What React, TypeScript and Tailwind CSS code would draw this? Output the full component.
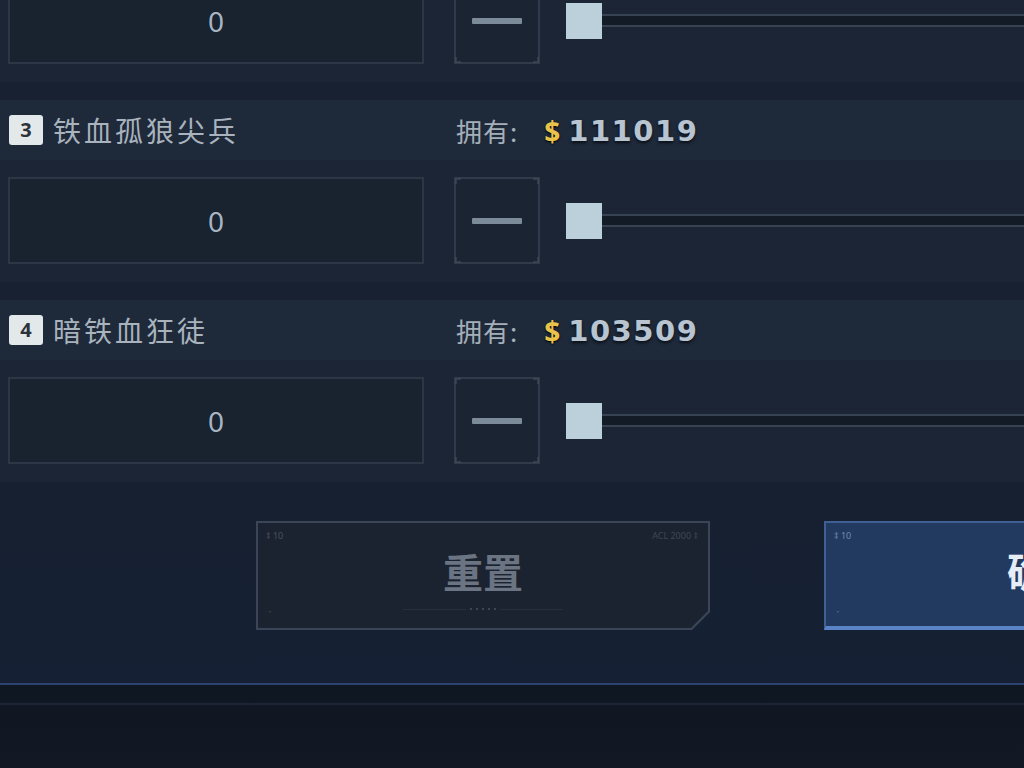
import React from 'react';

type Unit = {
  idx: number;
  name: string;
  owned: string;
};

const units: Unit[] = [
  { idx: 3, name: '铁血孤狼尖兵', owned: '111019' },
  { idx: 4, name: '暗铁血狂徒', owned: '103509' },
];

const cjk = { fontFamily: '"Noto Sans CJK SC", "Noto Sans", sans-serif' };
const num = { fontFamily: '"Noto Sans", "Liberation Sans", sans-serif' };
const wide = { fontFamily: '"DejaVu Sans", "Noto Sans", sans-serif' };

const Corners = ({ color = 'border-[#46536380]' }: { color?: string }) => (
  <>
    <span className={`absolute -left-px -top-px w-[6px] h-[6px] border-l-2 border-t-2 ${color}`} />
    <span className={`absolute -right-px -top-px w-[6px] h-[6px] border-r-2 border-t-2 ${color}`} />
    <span className={`absolute -left-px -bottom-px w-[6px] h-[6px] border-l-2 border-b-2 ${color}`} />
    <span className={`absolute -right-px -bottom-px w-[6px] h-[6px] border-r-2 border-b-2 ${color}`} />
  </>
);

const AmountRow = ({ className = '' }: { className?: string }) => (
  <div className={`bg-[#1b2535] h-[122px] pt-[17px] pl-2 flex ${className}`}>
    <div className="relative w-[416px] h-[87px] border-2 border-[#2b3747] bg-[#19222f] flex items-center justify-center">
      <span className="text-[28px] text-[#a7b5c2]" style={num}>0</span>
    </div>
    <div className="relative ml-[30px] w-[86px] h-[87px] border-2 border-[#2f3b4b] bg-[#1a2433] flex items-center justify-center">
      <Corners />
      <span className="w-[50px] h-[6px] bg-[#7c8b99] rounded-[1px]" />
    </div>
    <div className="ml-[26px] flex-1 h-[87px] flex items-center">
      <div className="w-[36px] h-[36px] bg-[#bcd0dc] shrink-0 z-10" />
      <div className="flex-1 h-[13px] border-y-2 border-[#364352] bg-[#131b27] -ml-px" />
    </div>
  </div>
);

const Header = ({ unit }: { unit: Unit }) => (
  <div className="bg-[#1e293a] h-[60px] flex items-center">
    <div className="w-[456px] pl-[9px] flex items-center gap-[10px]">
      <span
        className="w-[34px] h-[30px] rounded-[3px] bg-[#e3e8ea] flex items-center justify-center text-[20px] font-bold text-[#2c333b]"
        style={num}
      >
        {unit.idx}
      </span>
      <span className="text-[28px] text-[#a9b3bd] tracking-[3px]" style={cjk}>
        {unit.name}
      </span>
    </div>
    <div className="flex items-center">
      <span className="text-[26px] text-[#a5afb9] tracking-[1px]" style={cjk}>拥有:</span>
      <span
        className="ml-[26px] mt-[2px] text-[28px] font-bold text-[#e9c24b] [text-shadow:0_1px_2px_#000]"
        style={num}
      >
        $
      </span>
      <span
        className="ml-[8px] mt-[3px] text-[29px] font-bold tracking-[1.5px] text-[#b8c5d1] [text-shadow:0_2px_3px_#0b1018]"
        style={wide}
      >
        {unit.owned}
      </span>
    </div>
  </div>
);

export default function App() {
  return (
    <div className="w-[1024px] h-[768px] overflow-hidden bg-[#162031]" style={cjk}>
      <AmountRow className="-mt-[40px]" />
      {units.map((u) => (
        <div key={u.idx} className="pt-[18px] bg-[#172131]">
          <Header unit={u} />
          <AmountRow />
        </div>
      ))}

      <div className="h-[201px] bg-gradient-to-b from-[#162030] to-[#152034] pt-[39px] pl-[256px] flex gap-[114px]">
        {/* reset */}
        <div className="w-[454px] h-[109px] bg-[#3a4658] p-[2px] [clip-path:polygon(0_0,100%_0,100%_calc(100%-18px),calc(100%-18px)_100%,0_100%)] shrink-0">
          <div className="relative w-full h-full bg-[#1b2230] [clip-path:polygon(0_0,100%_0,100%_calc(100%-17px),calc(100%-17px)_100%,0_100%)] flex flex-col items-center justify-center">
            <span className="absolute left-[8px] top-[6px] text-[9px] text-[#4a5464]" style={num}>‡ 10</span>
            <span className="absolute right-[10px] top-[6px] text-[9px] text-[#3e4858]" style={num}>ACL 2000 ‡</span>
            <span className="absolute left-[8px] bottom-[10px] text-[8px] text-[#3e4858]">·</span>
            <span className="text-[40px] font-bold text-[#6b7482] leading-none -mt-[10px]">重置</span>
            <div className="absolute bottom-[16px] left-1/2 -translate-x-1/2 w-[160px] h-[6px] flex items-center">
              <span className="flex-1 h-px bg-[#262f3d]" />
              <span className="mx-[4px] flex gap-[4px]">
                <span className="w-[2px] h-[2px] bg-[#3c4656]" />
                <span className="w-[2px] h-[2px] bg-[#3c4656]" />
                <span className="w-[2px] h-[2px] bg-[#3c4656]" />
                <span className="w-[2px] h-[2px] bg-[#3c4656]" />
                <span className="w-[2px] h-[2px] bg-[#3c4656]" />
              </span>
              <span className="flex-1 h-px bg-[#262f3d]" />
            </div>
          </div>
        </div>
        {/* confirm */}
        <div className="relative w-[454px] h-[109px] shrink-0 bg-[#233a60] border-2 border-[#3f5f95] border-b-[4px] border-b-[#5a84c6] flex items-center justify-center">
          <span className="absolute left-[8px] top-[6px] text-[9px] text-[#6f8ab4]" style={num}>‡ 10</span>
          <span className="absolute left-[8px] bottom-[8px] text-[8px] text-[#4d6a96]">·</span>
          <span className="text-[40px] font-bold text-[#e6edf6] leading-none -mt-[10px] tracking-[4px]">确认</span>
        </div>
      </div>

      <div className="h-[2px] bg-[#2d4270]" />
      <div className="h-[83px] bg-gradient-to-b from-[#0f1722] to-[#121824]">
        <div className="h-[18px]" />
        <div className="h-[2px] bg-[#1b2536]" />
      </div>
    </div>
  );
}
